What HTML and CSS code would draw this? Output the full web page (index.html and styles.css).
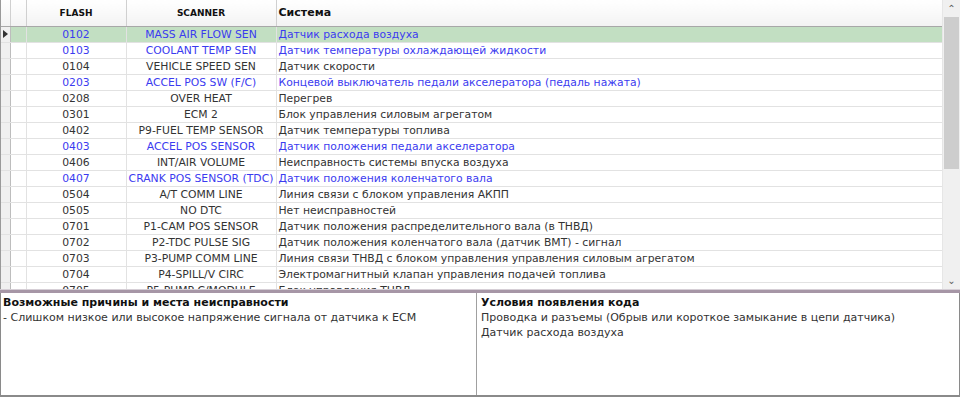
FILE: index.html
```html
<!DOCTYPE html>
<html lang="ru">
<head>
  <meta charset="UTF-8">
  <title>Коды неисправностей</title>
  <link rel="stylesheet" href="styles.css">
</head>
<body>
  <div class="window">
    <div class="grid-area">
      <div class="table-wrap">
        <table class="codes">
          <colgroup>
            <col class="c-ind"><col class="c-blank"><col class="c-flash"><col class="c-scan"><col>
          </colgroup>
          <thead>
            <tr>
              <th></th><th></th>
              <th class="small">FLASH</th>
              <th class="small">SCANNER</th>
              <th class="sys">Система</th>
            </tr>
          </thead>
          <tbody>
            <tr class="sel blue"><td class="ind"><span class="arrow"></span></td><td></td><td class="ctr">0102</td><td class="ctr">MASS AIR FLOW SEN</td><td>Датчик расхода воздуха</td></tr>
            <tr class="blue"><td class="ind"></td><td></td><td class="ctr">0103</td><td class="ctr">COOLANT TEMP SEN</td><td>Датчик температуры охлаждающей жидкости</td></tr>
            <tr><td class="ind"></td><td></td><td class="ctr">0104</td><td class="ctr">VEHICLE SPEED SEN</td><td>Датчик скорости</td></tr>
            <tr class="blue"><td class="ind"></td><td></td><td class="ctr">0203</td><td class="ctr">ACCEL POS SW (F/C)</td><td>Концевой выключатель педали акселератора (педаль нажата)</td></tr>
            <tr><td class="ind"></td><td></td><td class="ctr">0208</td><td class="ctr">OVER HEAT</td><td>Перегрев</td></tr>
            <tr><td class="ind"></td><td></td><td class="ctr">0301</td><td class="ctr">ECM 2</td><td>Блок управления силовым агрегатом</td></tr>
            <tr><td class="ind"></td><td></td><td class="ctr">0402</td><td class="ctr">P9-FUEL TEMP SENSOR</td><td>Датчик температуры топлива</td></tr>
            <tr class="blue"><td class="ind"></td><td></td><td class="ctr">0403</td><td class="ctr">ACCEL POS SENSOR</td><td>Датчик положения педали акселератора</td></tr>
            <tr><td class="ind"></td><td></td><td class="ctr">0406</td><td class="ctr">INT/AIR VOLUME</td><td>Неисправность системы впуска воздуха</td></tr>
            <tr class="blue"><td class="ind"></td><td></td><td class="ctr">0407</td><td class="ctr">CRANK POS SENSOR (TDC)</td><td>Датчик положения коленчатого вала</td></tr>
            <tr><td class="ind"></td><td></td><td class="ctr">0504</td><td class="ctr">A/T COMM LINE</td><td>Линия связи с блоком управления АКПП</td></tr>
            <tr><td class="ind"></td><td></td><td class="ctr">0505</td><td class="ctr">NO DTC</td><td>Нет неисправностей</td></tr>
            <tr><td class="ind"></td><td></td><td class="ctr">0701</td><td class="ctr">P1-CAM POS SENSOR</td><td>Датчик положения распределительного вала (в ТНВД)</td></tr>
            <tr><td class="ind"></td><td></td><td class="ctr">0702</td><td class="ctr">P2-TDC PULSE SIG</td><td>Датчик положения коленчатого вала (датчик ВМТ) - сигнал</td></tr>
            <tr><td class="ind"></td><td></td><td class="ctr">0703</td><td class="ctr">P3-PUMP COMM LINE</td><td>Линия связи ТНВД с блоком управления управления силовым агрегатом</td></tr>
            <tr><td class="ind"></td><td></td><td class="ctr">0704</td><td class="ctr">P4-SPILL/V CIRC</td><td>Электромагнитный клапан управления подачей топлива</td></tr>
            <tr class="partial"><td class="ind"></td><td></td><td class="ctr">0705</td><td class="ctr">P5-PUMP C/MODULE</td><td>Блок управления ТНВД</td></tr>
          </tbody>
        </table>
      </div>
      <div class="scrollbar">
        <div class="sb-btn">&#8963;</div>
        <div class="sb-track"><div class="sb-thumb"></div></div>
        <div class="sb-btn">&#8964;</div>
      </div>
    </div>
    <div class="splitter"></div>
    <div class="details">
      <div class="pane">
        <div class="pane-title">Возможные причины и места неисправности</div>
        <div>- Слишком низкое или высокое напряжение сигнала от датчика к ECM</div>
      </div>
      <div class="pane">
        <div class="pane-title">Условия появления кода</div>
        <div>Проводка и разъемы (Обрыв или короткое замыкание в цепи датчика)</div>
        <div>Датчик расхода воздуха</div>
      </div>
    </div>
  </div>
</body>
</html>
```

FILE: styles.css
```css
body {
  margin: 0;
  background: #fff;
  font-family: "DejaVu Sans", sans-serif;
  font-size: 11px;
  color: #333;
}
.window {
  width: 960px;
  height: 397px;
  display: flex;
  flex-direction: column;
  box-sizing: border-box;
  overflow: hidden;
}
.grid-area {
  height: 289px;
  display: flex;
  border-left: 1px solid #9a9a9a;
  box-sizing: border-box;
}
.table-wrap {
  flex: 1;
  overflow: hidden;
}
.codes {
  width: 100%;
  table-layout: fixed;
  border-collapse: collapse;
  font-size: 10.8px;
}
.c-ind { width: 9px; }
.c-blank { width: 16px; }
.c-flash { width: 100px; }
.c-scan { width: 150px; }
.codes thead tr {
  height: 26px;
}
.codes th {
  padding: 0 2px;
  background: linear-gradient(#ffffff, #f3f3f3);
  border-right: 1px solid #d0d0d0;
  border-bottom: 1px solid #a8a8a8;
  color: #111;
}
.codes th.small {
  font-size: 9px;
  font-weight: bold;
  text-align: center;
}
.codes th.sys {
  text-align: left;
  font-size: 11px;
  font-weight: bold;
  border-right: none;
}
.codes tbody tr {
  height: 16px;
}
.codes td {
  padding: 0 2px;
  border-bottom: 1px solid #e2e2e2;
  white-space: nowrap;
  overflow: hidden;
  line-height: 15px;
}
.codes td:nth-child(-n+4) {
  border-right: 1px solid #e2e2e2;
}
.codes td.ind {
  background: #f0f0f0;
  border-right: 1px solid #bdbdbd;
  padding: 0;
}
.codes td.ctr {
  text-align: center;
}
.codes tr.blue td {
  color: #3b3bf0;
}
.codes tr.sel td {
  background: #c2dfc2;
}
.codes tr.sel td.ind {
  background: #f0f0f0;
}
.codes tr.partial td {
  vertical-align: top;
}
.arrow {
  display: block;
  width: 0;
  height: 0;
  margin-left: 2px;
  border-top: 4px solid transparent;
  border-bottom: 4px solid transparent;
  border-left: 5px solid #333;
}
.scrollbar {
  width: 17px;
  display: flex;
  flex-direction: column;
  background: #f0f0f0;
  border-left: 1px solid #e6e6e6;
}
.sb-btn {
  height: 17px;
  text-align: center;
  font-size: 10px;
  line-height: 17px;
  color: #606060;
}
.sb-track {
  flex: 1;
  padding: 0 1px;
}
.sb-thumb {
  height: 152px;
  background: #cdcdcd;
}
.splitter {
  height: 3px;
  background: #a696a6;
  border-top: 1px solid #d6cfd6;
}
.details {
  flex: 1;
  display: grid;
  grid-template-columns: 475px 1fr;
  border: 1px solid #8a8a8a;
  border-top: none;
  border-bottom-width: 2px;
}
.pane {
  padding: 2px 2px;
  line-height: 15px;
}
.pane + .pane {
  border-left: 1px solid #a0a0a0;
  padding-left: 4px;
}
.pane-title {
  font-weight: bold;
  color: #111;
}
```
